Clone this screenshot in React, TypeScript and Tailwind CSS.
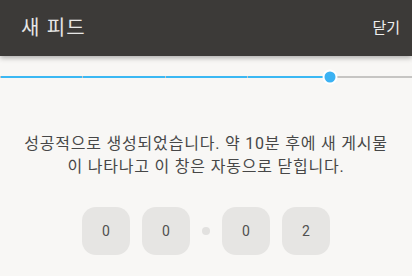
import React from "react";

const FONT = { fontFamily: 'Roboto, "Noto Sans CJK KR", "Noto Sans", sans-serif' };

function DigitBox({ d }: { d: string }) {
  return (
    <div className="flex h-12 w-12 items-center justify-center rounded-[14px] bg-[#e6e5e3] text-[14px] text-[#505050]">
      {d}
    </div>
  );
}

export default function App() {
  const ticks = [0, 20, 40, 60];
  return (
    <div className="h-[276px] w-[412px] overflow-hidden bg-[#f8f7f5]" style={FONT}>
      <div className="relative z-10 flex h-14 items-center justify-between bg-[#3c3a38] pl-[21px] pr-3 shadow-[0_2px_5px_rgba(0,0,0,0.3)]">
        <span className="text-[20px] tracking-[0.06em] text-[#e6e6e6]">새 피드</span>
        <span className="text-[15px] text-[#eeeeee]">닫기</span>
      </div>

      <div className="relative mt-5 h-[2px] w-full">
        <div className="absolute left-0 top-0 h-[2px] w-[80%] bg-[#3bb8f3]" />
        <div className="absolute right-0 top-0 h-[2px] w-[20%] bg-[#c6c5c3]" />
        {ticks.map((t) => (
          <div
            key={t}
            className="absolute top-0 h-[2px] w-px bg-[#c6c5c3]"
            style={{ left: `${t}%` }}
          />
        ))}
        <div className="absolute left-[80%] top-1/2 flex h-[15px] w-[15px] -translate-x-1/2 -translate-y-1/2 items-center justify-center rounded-full bg-white">
          <div className="h-[11px] w-[11px] rounded-full bg-[#3bb2f3]" />
        </div>
      </div>

      <p className="mt-[54px] break-all px-6 text-center text-[16px] leading-[23px] tracking-[0.05em] text-[#474747]">
        성공적으로 생성되었습니다. 약 10분 후에 새 게시물이 나타나고 이 창은 자동으로 닫힙니다.
      </p>

      <div className="mt-[29px] flex items-center justify-center gap-3">
        <DigitBox d="0" />
        <DigitBox d="0" />
        <div className="h-2 w-2 rounded-full bg-[#e2e1df]" />
        <DigitBox d="0" />
        <DigitBox d="2" />
      </div>
    </div>
  );
}
